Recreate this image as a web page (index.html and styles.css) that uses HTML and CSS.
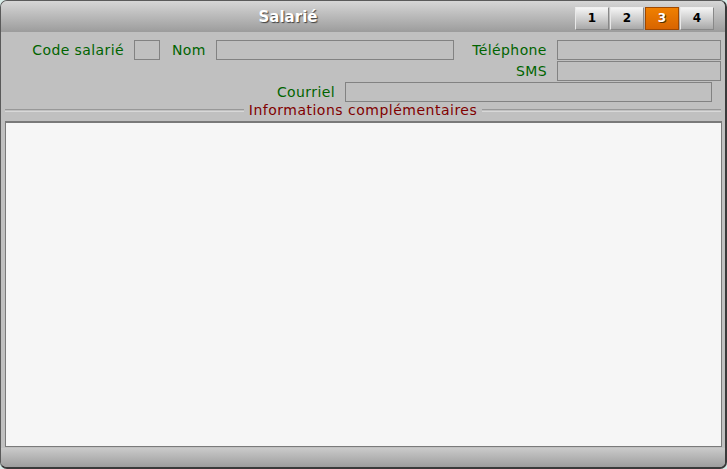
FILE: index.html
```
<!DOCTYPE html>
<html lang="fr">
<head>
    <meta charset="UTF-8">
    <title>Salarié</title>
    <link rel="stylesheet" href="styles.css">
</head>
<body>
    <div class="window">
        <div class="titlebar">
            <div class="title">Salarié</div>
            <div class="tabs">
                <div class="tab">1</div>
                <div class="tab">2</div>
                <div class="tab active">3</div>
                <div class="tab">4</div>
            </div>
        </div>

        <div class="fields">
            <div class="row">
                <label class="lbl w-code">Code salarié</label>
                <div class="field f-code"></div>
                <label class="lbl lbl-nom">Nom</label>
                <div class="field f-nom"></div>
                <label class="lbl w-tel">Téléphone</label>
                <div class="field f-tel"></div>
            </div>
            <div class="row">
                <label class="lbl w-sms">SMS</label>
                <div class="field f-tel"></div>
            </div>
            <div class="row">
                <label class="lbl w-mail">Courriel</label>
                <div class="field f-mail"></div>
            </div>
        </div>

        <div class="separator">
            <span class="sep-line"></span>
            <span class="sep-text">Informations complémentaires</span>
            <span class="sep-line"></span>
        </div>

        <div class="content"></div>
        <div class="bottombar"></div>
    </div>
</body>
</html>
```
FILE: styles.css
```
body {
    margin: 0;
    background: #d8ece8;
    font-family: "DejaVu Sans", Verdana, sans-serif;
}
.window {
    width: 727px;
    height: 469px;
    box-sizing: border-box;
    border: 1px solid #5a5a5a;
    border-right: 2px solid #3a3a3a;
    border-bottom: 2px solid #3a3a3a;
    border-radius: 7px;
    background: #c0c0c0;
    display: flex;
    flex-direction: column;
    overflow: hidden;
}
.titlebar {
    height: 31px;
    display: flex;
    align-items: center;
    background: linear-gradient(#d6d6d6, #9c9c9c);
    flex-shrink: 0;
}
.title {
    width: 574px;
    text-align: center;
    color: #fff;
    font-weight: bold;
    font-size: 15px;
    text-shadow: 1px 1px 1px #404040;
    padding-top: 1px;
}
.tabs {
    display: flex;
    gap: 1px;
    margin-top: 4px;
}
.tab {
    width: 32px;
    height: 21px;
    line-height: 21px;
    text-align: center;
    font-size: 12px;
    font-weight: bold;
    color: #000;
    border: 1px solid #888;
    border-top-color: #f0f0f0;
    border-left-color: #e8e8e8;
    background: linear-gradient(#f4f4f4, #c8c8c8 60%, #a8a8a8);
}
.tab.active {
    background: linear-gradient(#f08000, #d86400);
    color: #fff;
    text-shadow: 1px 1px 0 #553000;
    border-color: #a04800;
}
.fields {
    margin-top: 8px;
    display: flex;
    flex-direction: column;
    gap: 1px;
}
.row {
    display: flex;
    height: 20px;
    align-items: center;
}
.lbl {
    color: #006400;
    font-size: 14px;
    letter-spacing: 0.4px;
    text-align: right;
    margin-right: 10px;
    white-space: nowrap;
}
.w-code { width: 123px; }
.lbl-nom { margin-left: 12px; }
.w-tel { width: 93px; }
.w-sms { width: 546px; }
.w-mail { width: 334px; }
.field {
    height: 18px;
    border: 1px solid #828282;
    background: #c0c0c0;
}
.f-code { width: 24px; }
.f-nom { width: 236px; }
.f-tel { width: 162px; }
.f-mail { width: 365px; }
.separator {
    display: flex;
    align-items: center;
    margin: 0 4px 0 4px;
    height: 17px;
}
.sep-line {
    flex: 1;
    height: 1px;
    border-top: 1px solid #989898;
    border-bottom: 1px solid #d8d8d8;
}
.sep-text {
    color: #800000;
    font-size: 14px;
    letter-spacing: 0.5px;
    padding: 0 5px 1px 5px;
}
.content {
    margin: 2px 3px 0 4px;
    height: 323px;
    border: 1px solid #7a7a7a;
    border-top-width: 2px;
    background: #f6f6f6;
}
.bottombar {
    flex: 1;
    margin-top: 1px;
    background: linear-gradient(#cacaca, #9e9e9e);
}
```
